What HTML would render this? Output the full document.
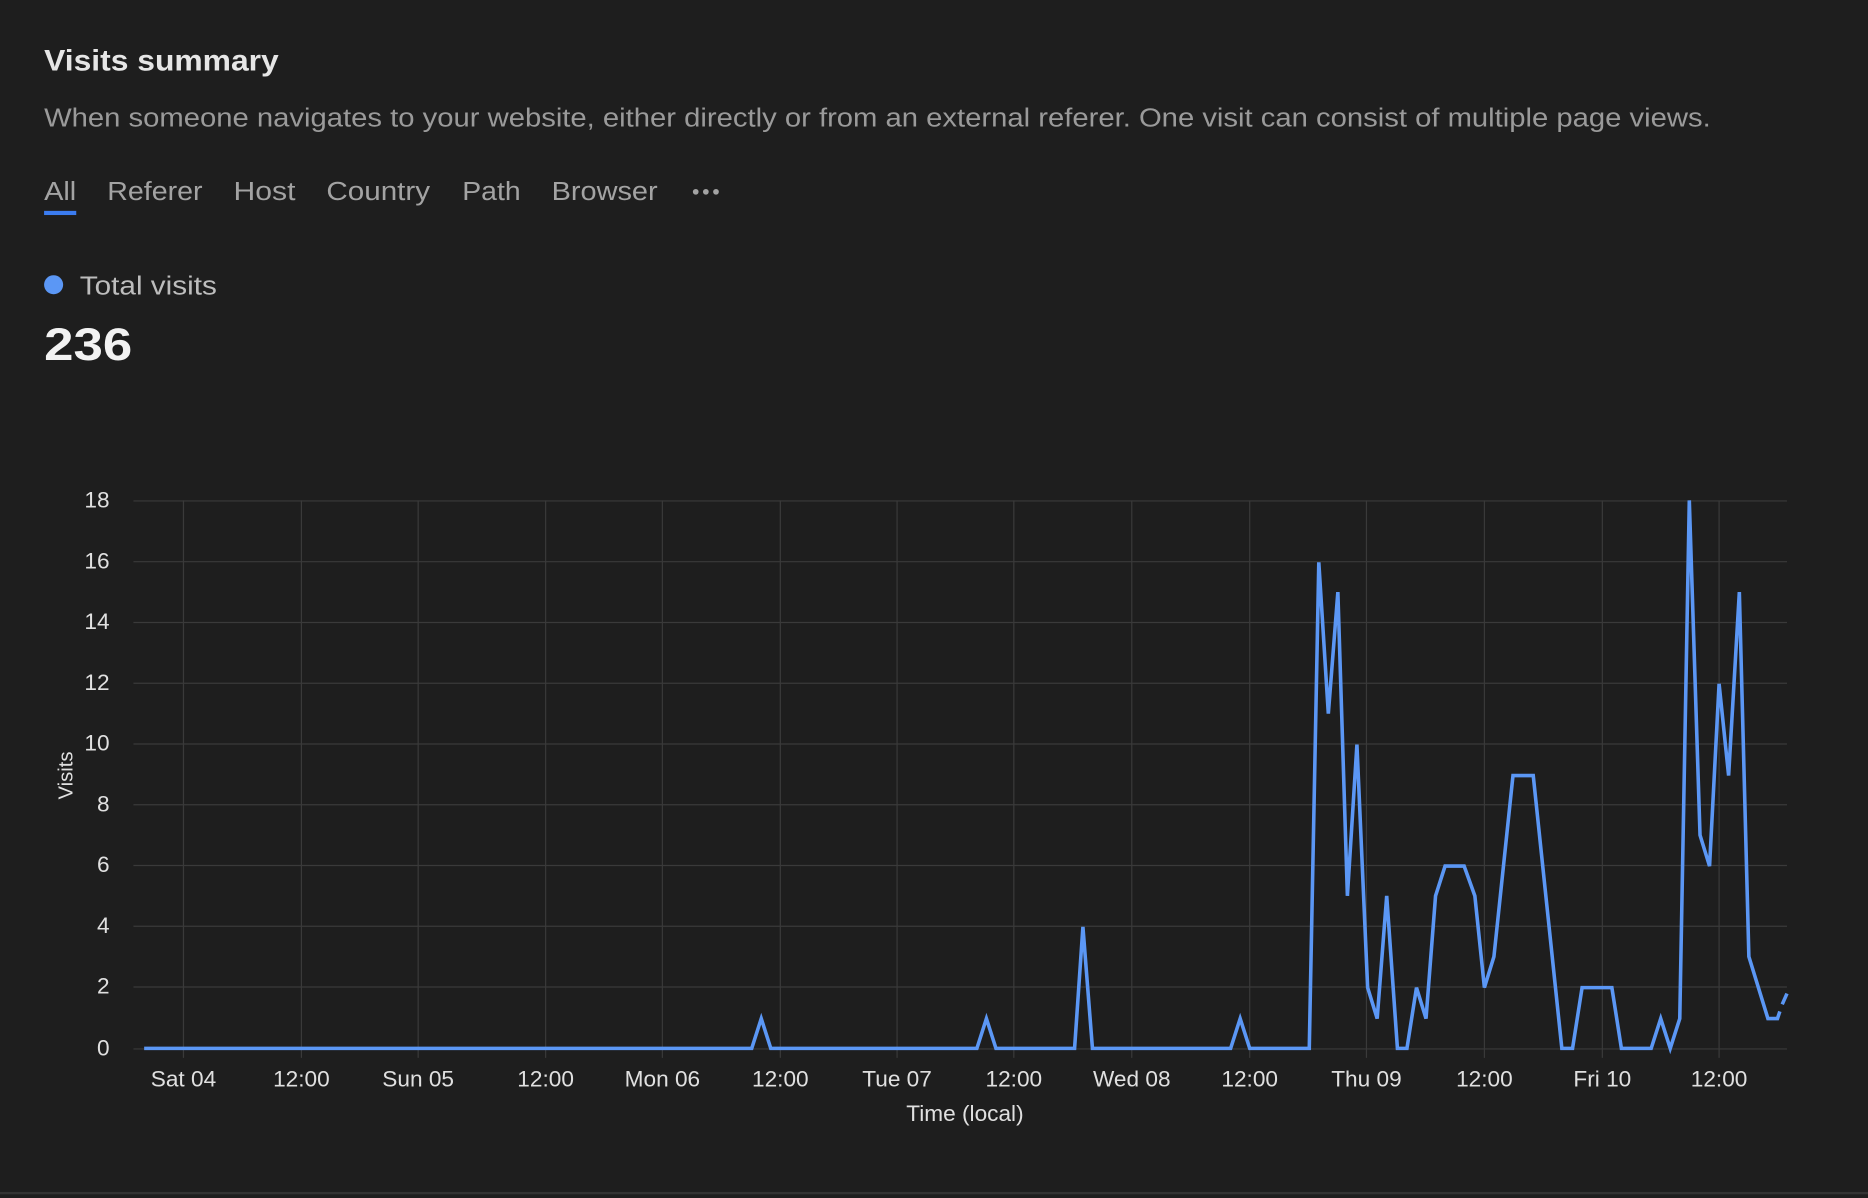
<!DOCTYPE html>
<html><head><meta charset="utf-8"><style>
html,body{margin:0;padding:0;background:#1e1e1e;width:1868px;height:1198px;overflow:hidden}
svg{display:block}
text{font-family:"Liberation Sans",sans-serif}
</style></head><body>
<svg width="1868" height="1198" viewBox="0 0 1568 1005.6" preserveAspectRatio="none">
<rect width="1568" height="1006" fill="#1e1e1e"/>
<rect x="0" y="1000.5" width="1568" height="2" fill="#333"/>
<text x="37" y="59" font-size="25" font-weight="bold" fill="#e6e6e6" textLength="197" lengthAdjust="spacingAndGlyphs">Visits summary</text>
<text x="37" y="106" font-size="22" fill="#9a9a9a" textLength="1399" lengthAdjust="spacingAndGlyphs">When someone navigates to your website, either directly or from an external referer. One visit can consist of multiple page views.</text>
<g font-size="22" fill="#a3a3a3">
<text x="37" y="168" textLength="27" lengthAdjust="spacingAndGlyphs">All</text>
<text x="90" y="168" textLength="80" lengthAdjust="spacingAndGlyphs">Referer</text>
<text x="196" y="168" textLength="52" lengthAdjust="spacingAndGlyphs">Host</text>
<text x="274" y="168" textLength="87" lengthAdjust="spacingAndGlyphs">Country</text>
<text x="388" y="168" textLength="49" lengthAdjust="spacingAndGlyphs">Path</text>
<text x="463" y="168" textLength="89" lengthAdjust="spacingAndGlyphs">Browser</text>
</g>
<circle cx="584" cy="161" r="2.4" fill="#a3a3a3"/><circle cx="592.5" cy="161" r="2.4" fill="#a3a3a3"/><circle cx="601" cy="161" r="2.4" fill="#a3a3a3"/>
<rect x="37" y="177" width="27" height="3.5" fill="#3b7cf0"/>
<circle cx="45" cy="239" r="8" fill="#5b97f5"/>
<text x="67" y="247" font-size="22" fill="#bdbdbd" textLength="115" lengthAdjust="spacingAndGlyphs">Total visits</text>
<text x="37" y="302" font-size="38" font-weight="bold" fill="#f2f2f2" textLength="74" lengthAdjust="spacingAndGlyphs">236</text>
<g stroke="#3a3a3a" stroke-width="1">
<line x1="112" x2="1500" y1="420.5" y2="420.5"/><line x1="112" x2="1500" y1="471.5" y2="471.5"/>
<line x1="112" x2="1500" y1="522.5" y2="522.5"/><line x1="112" x2="1500" y1="573.5" y2="573.5"/>
<line x1="112" x2="1500" y1="624.5" y2="624.5"/><line x1="112" x2="1500" y1="675.5" y2="675.5"/>
<line x1="112" x2="1500" y1="726.5" y2="726.5"/><line x1="112" x2="1500" y1="777.5" y2="777.5"/>
<line x1="112" x2="1500" y1="828.5" y2="828.5"/><line x1="112" x2="1500" y1="880.5" y2="880.5"/>
<g>
<line x1="154" x2="154" y1="420" y2="888"/><line x1="253" x2="253" y1="420" y2="888"/>
<line x1="351" x2="351" y1="420" y2="888"/><line x1="458" x2="458" y1="420" y2="888"/>
<line x1="556" x2="556" y1="420" y2="888"/><line x1="655" x2="655" y1="420" y2="888"/>
<line x1="753" x2="753" y1="420" y2="888"/><line x1="851" x2="851" y1="420" y2="888"/>
<line x1="950" x2="950" y1="420" y2="888"/><line x1="1049" x2="1049" y1="420" y2="888"/>
<line x1="1147" x2="1147" y1="420" y2="888"/><line x1="1246" x2="1246" y1="420" y2="888"/>
<line x1="1345" x2="1345" y1="420" y2="888"/><line x1="1443" x2="1443" y1="420" y2="888"/>
</g></g>
<g font-size="19" fill="#e0e0e0" text-anchor="end">
<text x="92" y="426">18</text><text x="92" y="477">16</text><text x="92" y="528">14</text>
<text x="92" y="579">12</text><text x="92" y="630">10</text><text x="92" y="681">8</text>
<text x="92" y="732">6</text><text x="92" y="783">4</text><text x="92" y="834">2</text><text x="92" y="886">0</text>
</g>
<text transform="translate(61,651) rotate(-90)" font-size="17" fill="#e0e0e0" text-anchor="middle">Visits</text>
<g font-size="19" fill="#e0e0e0" text-anchor="middle">
<text x="154" y="912">Sat 04</text><text x="253" y="912">12:00</text><text x="351" y="912">Sun 05</text>
<text x="458" y="912">12:00</text><text x="556" y="912">Mon 06</text><text x="655" y="912">12:00</text>
<text x="753" y="912">Tue 07</text><text x="851" y="912">12:00</text><text x="950" y="912">Wed 08</text>
<text x="1049" y="912">12:00</text><text x="1147" y="912">Thu 09</text><text x="1246" y="912">12:00</text>
<text x="1345" y="912">Fri 10</text><text x="1443" y="912">12:00</text>
<text x="810" y="941">Time (local)</text>
</g>
<polyline fill="none" stroke="#5b97f5" stroke-width="3" stroke-linejoin="miter" points="121,880 631,880 639,855 647,880 820,880 828,855 836,880 902,880 909,778 917,880 1033,880 1041,855 1049,880 1099,880 1107,472 1115,599 1123,497 1131,752 1139,625 1148,829 1156,855 1164,752 1173,880 1181,880 1189,829 1197,855 1205,752 1213,727 1229,727 1238,752 1246,829 1254,803 1270,651 1287,651 1311,880 1320,880 1328,829 1353,829 1361,880 1386,880 1394,855 1402,880 1410,855 1418,420 1427,701 1435,727 1443,574 1451,651 1460,497 1468,803 1484,855 1492,855 1494,849"/>
<line x1="1496" y1="843" x2="1500" y2="834" stroke="#5b97f5" stroke-width="3"/>
</svg>
</body></html>
